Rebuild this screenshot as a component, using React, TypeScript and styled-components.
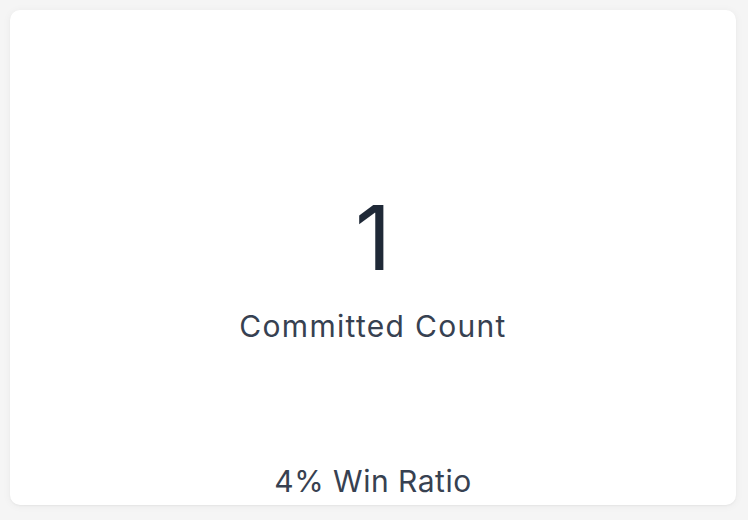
import React from "react";
import styled, { createGlobalStyle } from "styled-components";

const Global = createGlobalStyle`
  html, body { margin: 0; padding: 0; background: #f5f5f5; }
  body { font-family: Inter, "Noto Sans", sans-serif; }
`;

const Page = styled.div`
  width: 748px;
  height: 520px;
  padding: 10px 12px 15px 10px;
  box-sizing: border-box;
  display: flex;
`;

const Card = styled.div`
  flex: 1;
  background: #ffffff;
  border-radius: 10px;
  box-shadow: 0 1px 8px rgba(0, 0, 0, 0.05), 0 1px 2px rgba(0, 0, 0, 0.04);
  display: flex;
  flex-direction: column;
  align-items: center;
  padding: 183px 0 6px;
  box-sizing: border-box;
`;

const Value = styled.div`
  font-size: 89px;
  line-height: 1;
  height: 89px;
  color: #1f2937;
  font-weight: 400;
`;

const Label = styled.div`
  margin-top: 26px;
  font-size: 30px;
  letter-spacing: 1.3px;
  color: #374151;
  line-height: 36px;
`;

const Footer = styled.div`
  margin-top: auto;
  font-size: 30px;
  letter-spacing: 0.5px;
  color: #374151;
  line-height: 36px;
`;

export default function App() {
  return (
    <>
      <Global />
      <Page>
        <Card>
          <Value>1</Value>
          <Label>Committed Count</Label>
          <Footer>4% Win Ratio</Footer>
        </Card>
      </Page>
    </>
  );
}
